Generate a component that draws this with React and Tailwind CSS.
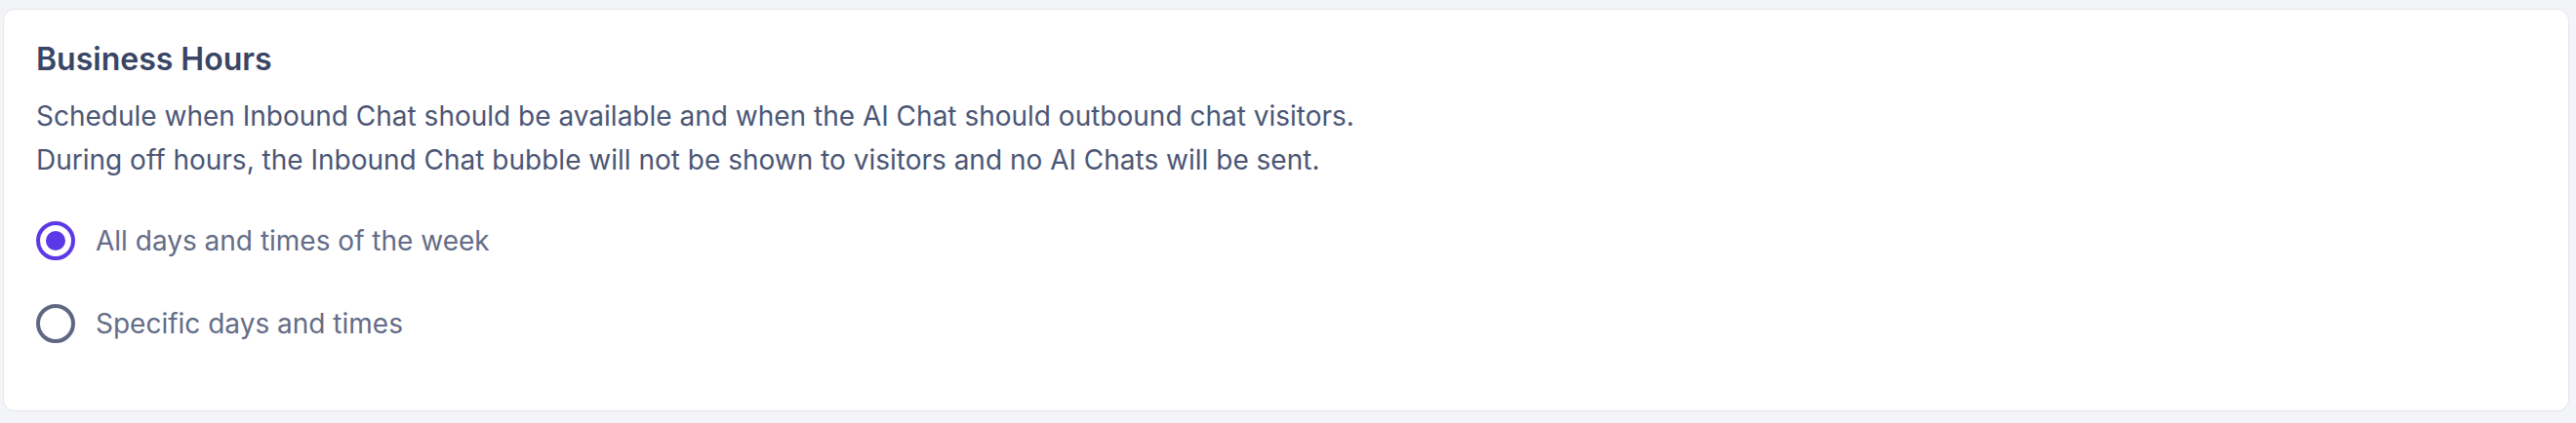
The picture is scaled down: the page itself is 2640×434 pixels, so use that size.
import { useState } from 'react';

const options = [
  { id: 'all', label: 'All days and times of the week' },
  { id: 'specific', label: 'Specific days and times' },
];

function Radio({ checked }) {
  return (
    <span
      className={`flex h-[40px] w-[40px] shrink-0 items-center justify-center rounded-full border-[4px] ${
        checked ? 'border-[#5b39e6]' : 'border-[#5f6781]'
      }`}
    >
      {checked && <span className="h-[20px] w-[20px] rounded-full bg-[#5b39e6]" />}
    </span>
  );
}

export default function App() {
  const [mode, setMode] = useState('all');

  return (
    <div className="h-[434px] w-full bg-[#f3f4f8] pt-[9px] pr-[7px] pb-[12px] pl-[3px] font-['Inter',sans-serif]">
      <div className="h-full rounded-[12px] border border-[#e4e6ec] bg-white pt-[31px] pl-[33px]">
        <h2 className="text-[32px] leading-[40px] font-semibold text-[#394564]">Business Hours</h2>
        <p className="mt-[16px] text-[28px] leading-[45px] text-[#4b5675]">
          Schedule when Inbound Chat should be available and when the AI Chat should outbound chat visitors.
          <br />
          During off hours, the Inbound Chat bubble will not be shown to visitors and no AI Chats will be sent.
        </p>

        <div className="mt-[40px] flex flex-col gap-[45px]">
          {options.map(o => (
            <label key={o.id} className="flex cursor-pointer items-center gap-[21px]" onClick={() => setMode(o.id)}>
              <Radio checked={mode === o.id} />
              <span className="text-[28px] leading-[40px] text-[#646c87]">{o.label}</span>
            </label>
          ))}
        </div>
      </div>
    </div>
  );
}
